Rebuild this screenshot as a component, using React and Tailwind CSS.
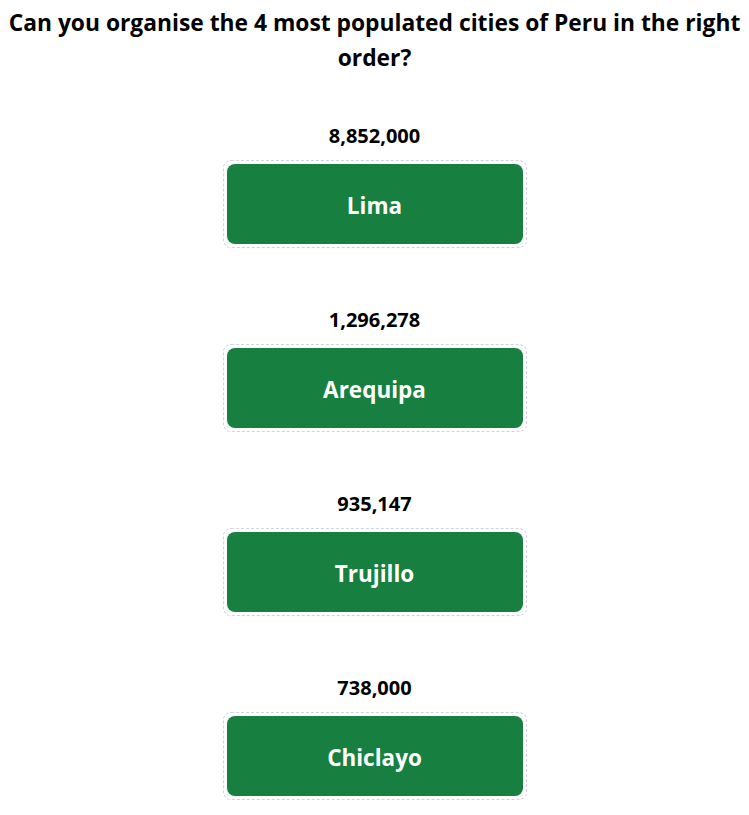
import React from "react";

const cities = [
  { name: "Lima", population: "8,852,000" },
  { name: "Arequipa", population: "1,296,278" },
  { name: "Trujillo", population: "935,147" },
  { name: "Chiclayo", population: "738,000" },
];

export default function App() {
  return (
    <div className="min-h-screen w-full bg-white font-['Open_Sans',sans-serif] text-black">
      <h2 className="pt-[5px] text-center text-[22.8px] font-bold leading-[35px]">
        Can you organise the 4 most populated cities of Peru in the right
        order?
      </h2>

      <ul className="mt-[47px] flex flex-col items-center gap-[58px]">
        {cities.map((city) => (
          <li key={city.name} className="flex flex-col items-center">
            <span className="text-[20px] font-bold leading-[28px]">
              {city.population}
            </span>
            <div className="mt-[10px] rounded-[8px] border border-dashed border-gray-300 p-[3px]">
              <div className="flex h-[80px] w-[296px] items-center justify-center rounded-[8px] bg-[#177f3f] pt-[3px] text-[22.5px] font-bold text-white">
                {city.name}
              </div>
            </div>
          </li>
        ))}
      </ul>
    </div>
  );
}
